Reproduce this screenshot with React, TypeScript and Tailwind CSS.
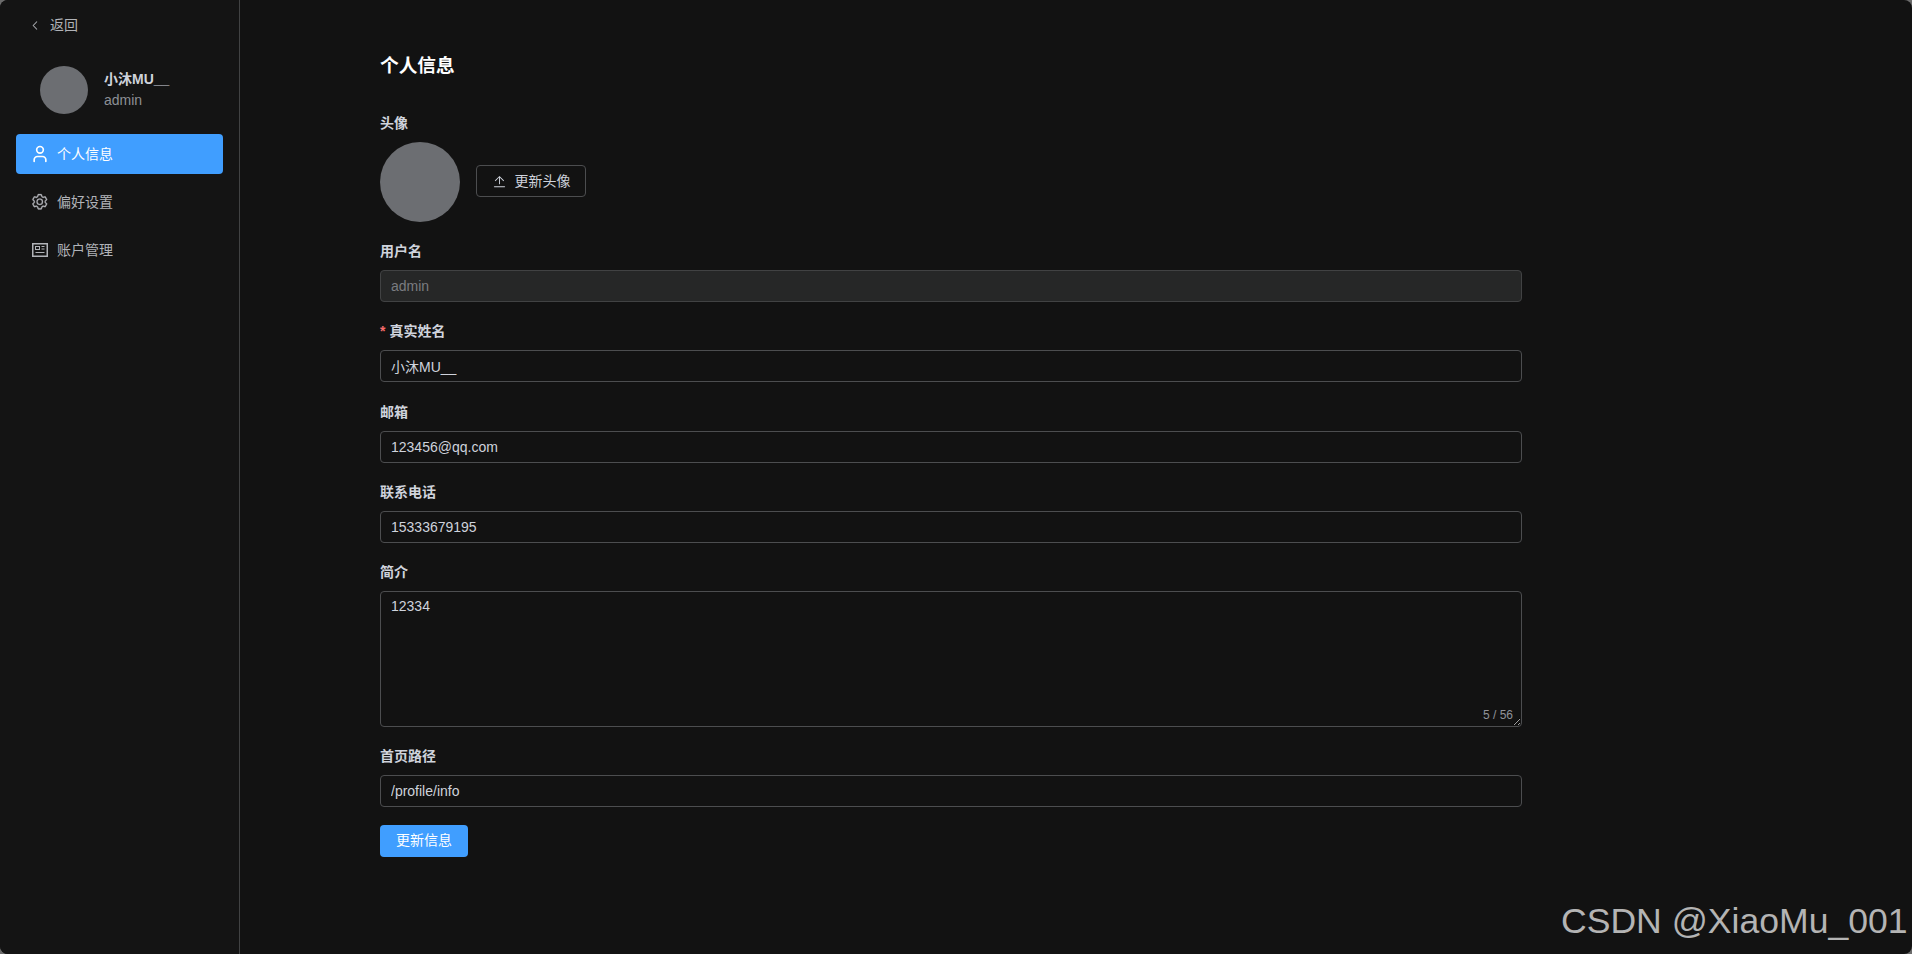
import React from 'react';
import { User } from 'lucide-react';

const FONT = '[font-family:"Liberation_Sans","Noto_Sans_CJK_SC",sans-serif]';

function SettingIcon() {
    return (
        <svg viewBox="0 0 1024 1024" className="w-[17.5px] h-[17.5px]" fill="currentColor" stroke="currentColor" strokeWidth="16">
            <path d="M600.704 64a32 32 0 0 1 30.464 22.208l35.2 109.376c14.784 7.232 28.928 15.36 42.432 24.512l112.384-24.192a32 32 0 0 1 34.432 15.36L944.32 364.8a32 32 0 0 1-4.032 37.504l-77.12 85.12a357 357 0 0 1 0 49.024l77.12 85.248a32 32 0 0 1 4.032 37.504l-88.704 153.6a32 32 0 0 1-34.432 15.296L708.8 803.904c-13.44 9.088-27.648 17.28-42.368 24.512l-35.264 109.376A32 32 0 0 1 600.704 960H423.296a32 32 0 0 1-30.464-22.208L357.696 828.48a352 352 0 0 1-42.56-24.64l-112.32 24.256a32 32 0 0 1-34.432-15.36L79.68 659.2a32 32 0 0 1 4.032-37.504l77.12-85.248a357 357 0 0 1 0-48.896l-77.12-85.248A32 32 0 0 1 79.68 364.8l88.704-153.6a32 32 0 0 1 34.432-15.296l112.32 24.256c13.568-9.152 27.776-17.408 42.56-24.64l35.2-109.312A32 32 0 0 1 423.232 64H600.64zm-23.424 64H446.72l-36.352 113.088-24.512 11.968a294 294 0 0 0-34.816 20.096l-22.656 15.36-116.224-25.088-65.28 113.152 79.68 88.192-1.92 27.136a293 293 0 0 0 0 40.192l1.92 27.136-79.808 88.192 65.344 113.152 116.224-25.024 22.656 15.296a294 294 0 0 0 34.816 20.096l24.512 11.968L446.72 896h130.688l36.48-113.152 24.448-11.904a288 288 0 0 0 34.752-20.096l22.592-15.296 116.288 25.024 65.28-113.152-79.744-88.192 1.92-27.136a293 293 0 0 0 0-40.256l-1.92-27.136 79.808-88.128-65.344-113.152-116.288 24.96-22.592-15.232a288 288 0 0 0-34.752-20.096l-24.448-11.904L577.344 128zM512 320a192 192 0 1 1 0 384 192 192 0 0 1 0-384m0 64a128 128 0 1 0 0 256 128 128 0 0 0 0-256" />
        </svg>
    );
}

// cadre + bloc photo + lignes, pas d'équivalent dans les packs
function ProfileCardIcon() {
    return (
        <svg viewBox="0 0 16 14" className="w-4 h-[14px]" fill="none" stroke="currentColor">
            <rect x="0.75" y="0.75" width="14.5" height="12.5" strokeWidth="1.5" />
            <rect x="3.5" y="3.5" width="4" height="3" strokeWidth="1" />
            <path d="M9.5 3.5h3M9.5 6h3M3.5 9.5h9" strokeWidth="1" />
        </svg>
    );
}

function UploadIcon() {
    return (
        <svg viewBox="0 0 1024 1024" className="w-[15px] h-[15px]" fill="currentColor">
            <path d="M160 832h704a32 32 0 1 1 0 64H160a32 32 0 1 1 0-64m384-578.304V704h-64V247.296L237.248 490.048 192 444.8 508.8 128l316.8 316.8-45.312 45.248z" />
        </svg>
    );
}

function ArrowLeftIcon() {
    return (
        <svg viewBox="0 0 1024 1024" className="w-[11px] h-[11px]" fill="currentColor" stroke="currentColor" strokeWidth="30">
            <path d="M609.408 149.376 277.76 489.6a32 32 0 0 0 0 44.672l331.648 340.352a29.12 29.12 0 0 0 41.728 0 30.59 30.59 0 0 0 0-42.752L339.264 511.936l311.872-319.872a30.59 30.59 0 0 0 0-42.688 29.12 29.12 0 0 0-41.728 0" />
        </svg>
    );
}

function Field({ label, required, children }: { label: string; required?: boolean; children: React.ReactNode }) {
    return (
        <div className="mb-[18.25px]">
            <label className="block h-[30px] leading-[22px] text-[14px] font-bold text-[#cfd3dc]">
                {required && <span className="text-[#f56c6c] mr-1">*</span>}
                {label}
            </label>
            {children}
        </div>
    );
}

function TextInput({ value, disabled }: { value: string; disabled?: boolean }) {
    return (
        <input
            readOnly
            value={value}
            disabled={disabled}
            className={
                disabled
                    ? 'block w-full h-8 px-[10px] rounded border border-[#414243] bg-[#262727] text-[14px] text-[#7a7c80] outline-none'
                    : 'block w-full h-8 px-[10px] rounded border border-[#4c4d4f] bg-transparent text-[14px] text-[#cfd3dc] outline-none'
            }
        />
    );
}

export default function App() {
    return (
        <div className="bg-[#6b6b6b]">
            <div className={`relative flex h-[954px] overflow-hidden rounded-lg bg-[#121212] ${FONT}`}>
                <aside className="w-[240px] shrink-0 border-r border-[#414243] bg-[#141414] px-4">
                    <div className="flex items-center h-[50px] pl-[14px] text-[14px] text-[#b1b3b8]">
                        <ArrowLeftIcon />
                        <span className="ml-[9px]">返回</span>
                    </div>
                    <div className="flex items-center h-[48px] mt-4 pl-6 mb-5">
                        <div className="w-12 h-12 rounded-full bg-[#6c6e72]" />
                        <div className="ml-4">
                            <div className="text-[14px] leading-[21px] font-bold text-[#cfd3dc]">小沐MU__</div>
                            <div className="text-[14px] leading-[21px] text-[#8d9095]">admin</div>
                        </div>
                    </div>
                    <nav className="w-[207px] flex flex-col gap-2 text-[14px]">
                        <div className="flex items-center h-10 pl-[14px] gap-[7px] rounded bg-[#409eff] text-white">
                            <User size={20} strokeWidth={2} className="shrink-0" />
                            个人信息
                        </div>
                        <div className="flex items-center h-10 pl-[14px] gap-[7px] rounded text-[#b1b3b8]">
                            <span className="flex items-center justify-center w-5 h-5">
                                <SettingIcon />
                            </span>
                            偏好设置
                        </div>
                        <div className="flex items-center h-10 pl-[14px] gap-[7px] rounded text-[#b1b3b8]">
                            <span className="flex items-center justify-center w-5 h-5">
                                <ProfileCardIcon />
                            </span>
                            账户管理
                        </div>
                    </nav>
                </aside>

                <main className="flex-1 pl-[140px] pt-[52px]">
                    <div className="w-[1142px]">
                        <h1 className="text-[18.7px] leading-[27px] font-bold text-white mb-[34px]">个人信息</h1>

                        <label className="block h-[30px] leading-[22px] text-[14px] font-bold text-[#cfd3dc] -mt-[1px]">头像</label>
                        <div className="flex items-center gap-4 mb-[18px]">
                            <div className="w-20 h-20 rounded-full bg-[#6c6e72]" />
                            <button className="flex items-center justify-center gap-2 w-[110px] h-8 mb-[2px] rounded border border-[#4c4d4f] text-[14px] text-[#cfd3dc]">
                                <UploadIcon />
                                更新头像
                            </button>
                        </div>

                        <Field label="用户名">
                            <TextInput value="admin" disabled />
                        </Field>
                        <Field label="真实姓名" required>
                            <TextInput value="小沐MU__" />
                        </Field>
                        <Field label="邮箱">
                            <TextInput value="123456@qq.com" />
                        </Field>
                        <Field label="联系电话">
                            <TextInput value="15333679195" />
                        </Field>
                        <Field label="简介">
                            <div className="relative">
                                <textarea
                                    readOnly
                                    value="12334"
                                    className="block w-full h-[136px] px-[10px] py-[4px] rounded border border-[#4c4d4f] bg-transparent text-[14px] leading-[21px] text-[#cfd3dc] outline-none"
                                />
                                <span className="absolute right-[9px] bottom-[4px] text-[12px] leading-[15px] text-[#909399]">5 / 56</span>
                            </div>
                        </Field>
                        <Field label="首页路径">
                            <TextInput value="/profile/info" />
                        </Field>

                        <button className="w-[88px] h-8 -mt-[1px] block rounded bg-[#409eff] text-[14px] text-white">更新信息</button>
                    </div>
                </main>

                <div className="absolute left-[1561px] top-[898px] text-[35.6px] leading-[46px] text-[#b4b4b4] whitespace-nowrap">
                    CSDN @XiaoMu_001
                </div>
            </div>
        </div>
    );
}
